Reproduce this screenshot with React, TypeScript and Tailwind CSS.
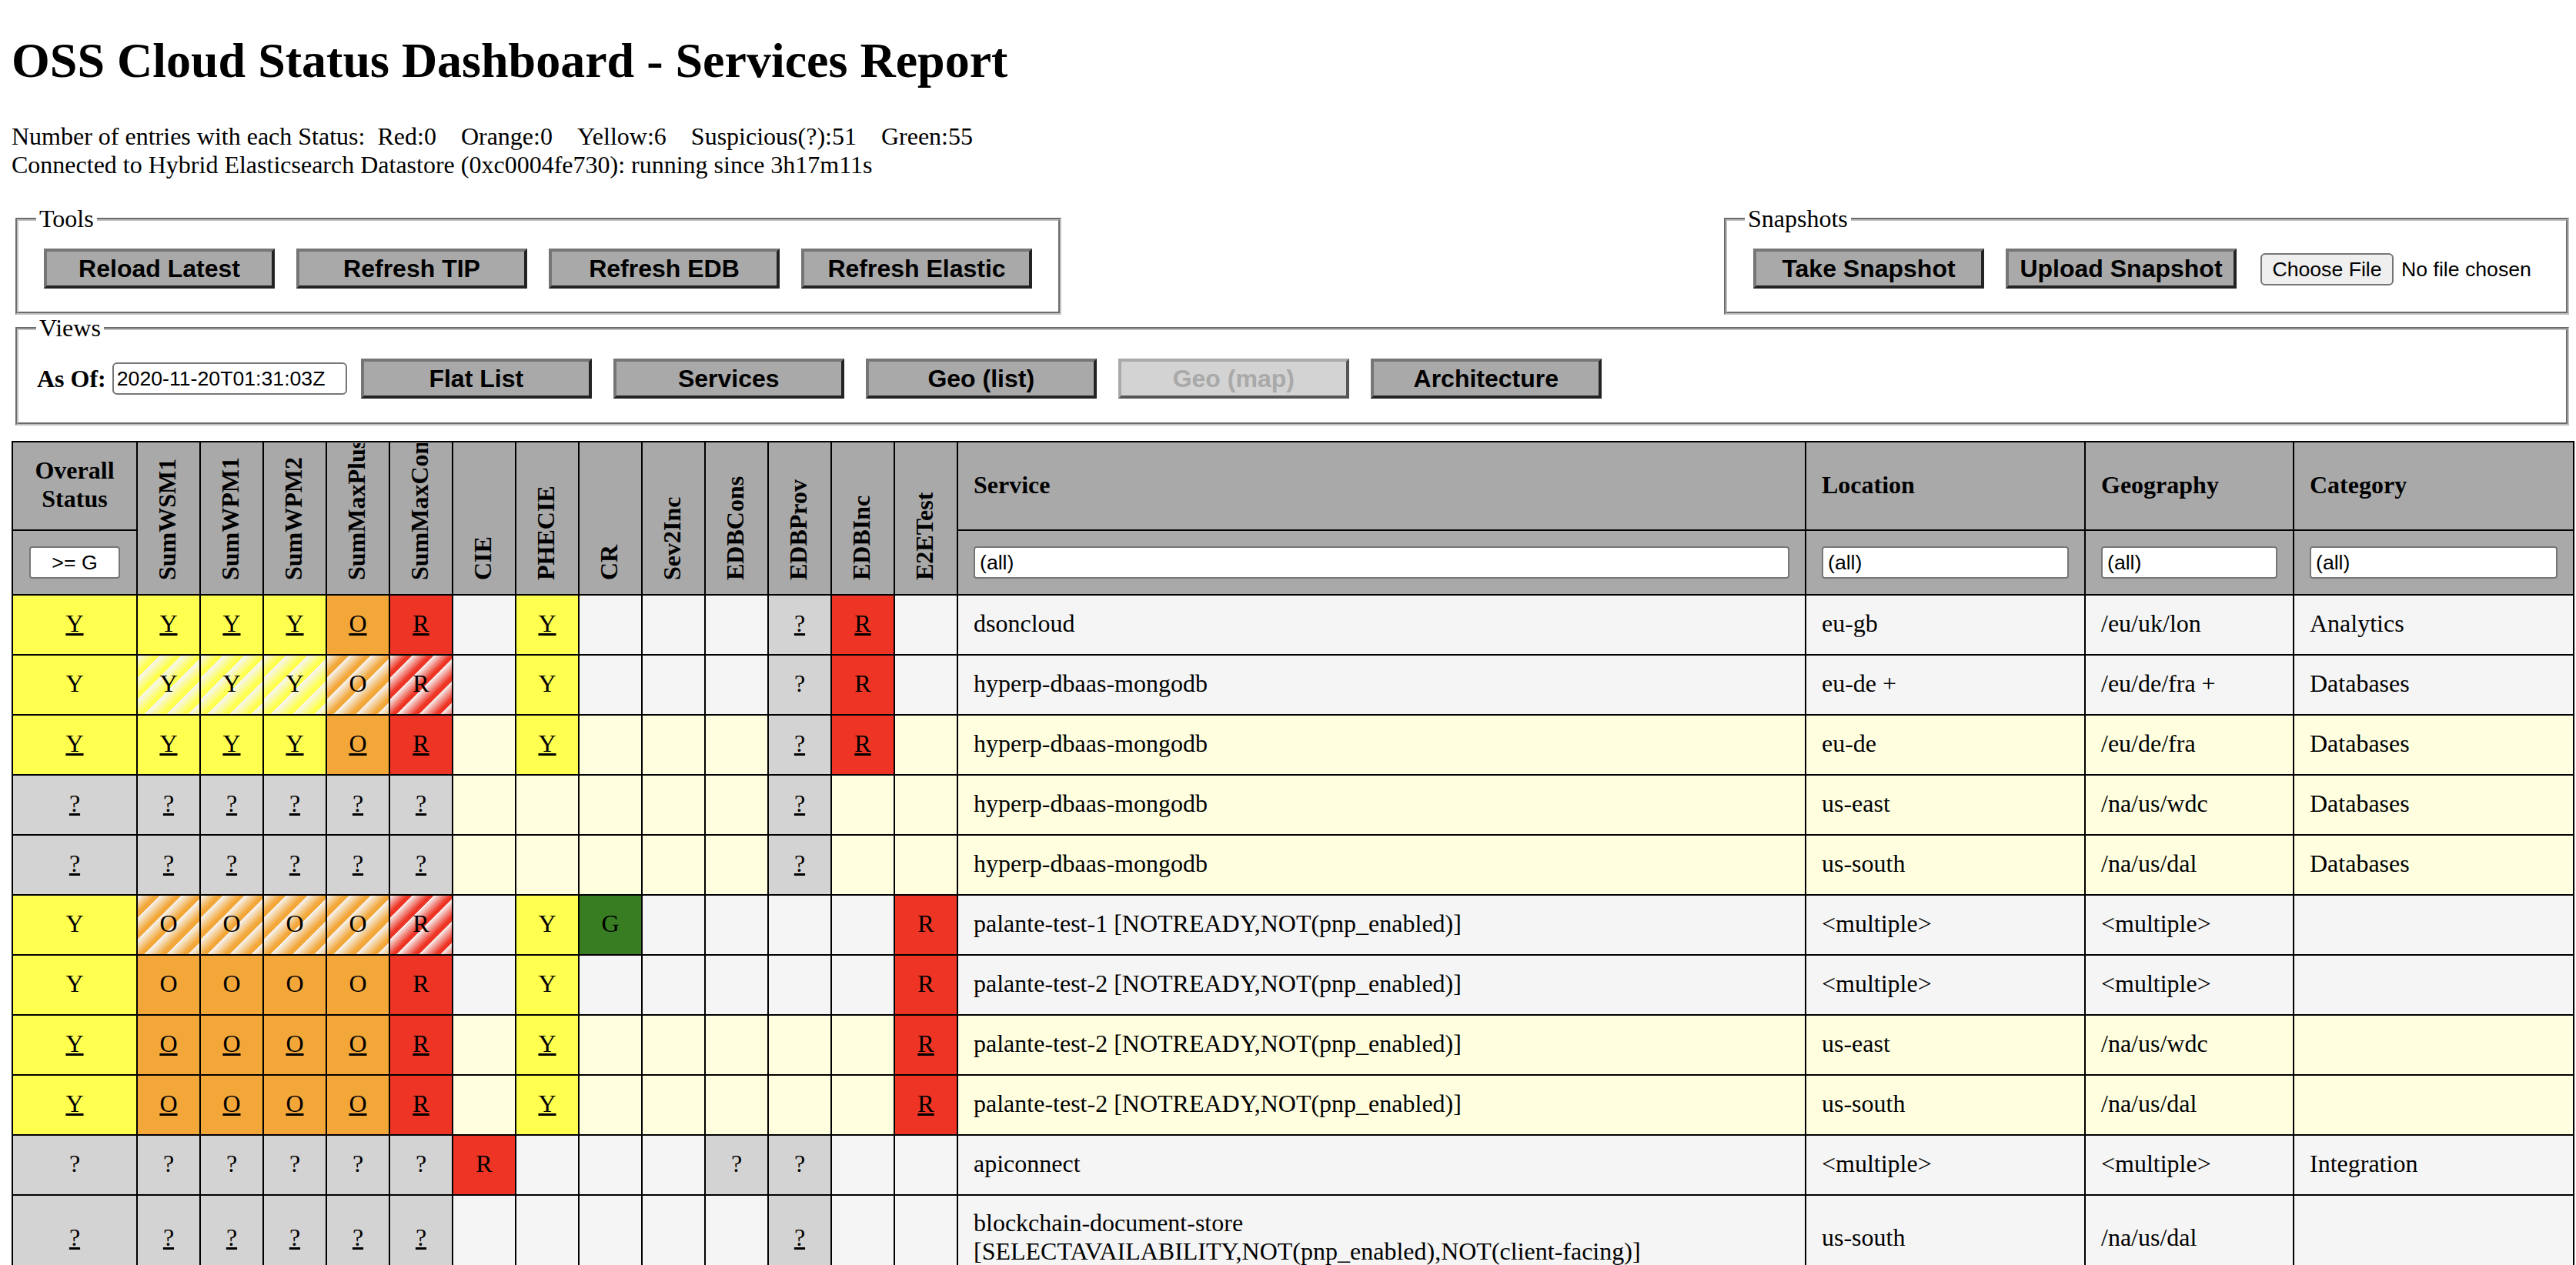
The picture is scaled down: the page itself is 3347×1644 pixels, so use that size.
import React from "react";

const bg: Record<string, string> = {
  Y: "bg-[#ffff50]",
  O: "bg-[#f3a738]",
  R: "bg-[#ee3424]",
  G: "bg-[#387d22]",
  "?": "bg-[#d3d3d3]",
  "Y*": "bg-[repeating-linear-gradient(135deg,#f5f5f5_0px,#ffff50_16px,#ffff50_20px)]",
  "O*": "bg-[repeating-linear-gradient(135deg,#f5f5f5_0px,#f3a738_16px,#f3a738_20px)]",
  "R*": "bg-[repeating-linear-gradient(135deg,#f5f5f5_0px,#ee3424_16px,#ee3424_20px)]",
};

type Row = {
  s: string[];
  u: boolean;
  z: "g" | "y";
  service: React.ReactNode;
  loc: string;
  geo: string;
  cat: string;
};

const rows: Row[] = [
  { s: ["Y", "Y", "Y", "Y", "O", "R", "", "Y", "", "", "", "?", "R", ""], u: true, z: "g", service: "dsoncloud", loc: "eu-gb", geo: "/eu/uk/lon", cat: "Analytics" },
  { s: ["Y", "Y*", "Y*", "Y*", "O*", "R*", "", "Y", "", "", "", "?", "R", ""], u: false, z: "g", service: "hyperp-dbaas-mongodb", loc: "eu-de +", geo: "/eu/de/fra +", cat: "Databases" },
  { s: ["Y", "Y", "Y", "Y", "O", "R", "", "Y", "", "", "", "?", "R", ""], u: true, z: "y", service: "hyperp-dbaas-mongodb", loc: "eu-de", geo: "/eu/de/fra", cat: "Databases" },
  { s: ["?", "?", "?", "?", "?", "?", "", "", "", "", "", "?", "", ""], u: true, z: "y", service: "hyperp-dbaas-mongodb", loc: "us-east", geo: "/na/us/wdc", cat: "Databases" },
  { s: ["?", "?", "?", "?", "?", "?", "", "", "", "", "", "?", "", ""], u: true, z: "y", service: "hyperp-dbaas-mongodb", loc: "us-south", geo: "/na/us/dal", cat: "Databases" },
  { s: ["Y", "O*", "O*", "O*", "O*", "R*", "", "Y", "G", "", "", "", "", "R"], u: false, z: "g", service: "palante-test-1 [NOTREADY,NOT(pnp_enabled)]", loc: "<multiple>", geo: "<multiple>", cat: "" },
  { s: ["Y", "O", "O", "O", "O", "R", "", "Y", "", "", "", "", "", "R"], u: false, z: "g", service: "palante-test-2 [NOTREADY,NOT(pnp_enabled)]", loc: "<multiple>", geo: "<multiple>", cat: "" },
  { s: ["Y", "O", "O", "O", "O", "R", "", "Y", "", "", "", "", "", "R"], u: true, z: "y", service: "palante-test-2 [NOTREADY,NOT(pnp_enabled)]", loc: "us-east", geo: "/na/us/wdc", cat: "" },
  { s: ["Y", "O", "O", "O", "O", "R", "", "Y", "", "", "", "", "", "R"], u: true, z: "y", service: "palante-test-2 [NOTREADY,NOT(pnp_enabled)]", loc: "us-south", geo: "/na/us/dal", cat: "" },
  { s: ["?", "?", "?", "?", "?", "?", "R", "", "", "", "?", "?", "", ""], u: false, z: "g", service: "apiconnect", loc: "<multiple>", geo: "<multiple>", cat: "Integration" },
  {
    s: ["?", "?", "?", "?", "?", "?", "", "", "", "", "", "?", "", ""],
    u: true,
    z: "g",
    service: (
      <>
        blockchain-document-store
        <br />
        [SELECTAVAILABILITY,NOT(pnp_enabled),NOT(client-facing)]
      </>
    ),
    loc: "us-south",
    geo: "/na/us/dal",
    cat: "",
  },
];

const vertical = ["SumWSM1", "SumWPM1", "SumWPM2", "SumMaxPlus", "SumMaxConc", "CIE", "PHECIE", "CR", "Sev2Inc", "EDBCons", "EDBProv", "EDBInc", "E2ETest"];
const textHeads = ["Service", "Location", "Geography", "Category"];

function Btn({ children, disabled }: { children: React.ReactNode; disabled?: boolean }) {
  return disabled ? (
    <button
      disabled
      className="w-[300px] h-[52px] shrink-0 border-4 border-t-[#a9a9a9] border-l-[#a9a9a9] border-r-[#555555] border-b-[#555555] bg-[#d3d3d3] text-[#a9a9a9] font-['Liberation_Sans',sans-serif] font-bold text-[32px] leading-[37px]"
    >
      {children}
    </button>
  ) : (
    <button className="w-[300px] h-[52px] shrink-0 border-4 border-t-[#767676] border-l-[#767676] border-r-[#232323] border-b-[#232323] bg-[#a9a9a9] text-black font-['Liberation_Sans',sans-serif] font-bold text-[32px] leading-[37px]">
      {children}
    </button>
  );
}

function Group({ title, className, children }: { title: string; className: string; children: React.ReactNode }) {
  return (
    <fieldset className={"border-4 [border-style:groove] border-[#c0c0c0] " + className}>
      <legend className="ml-[23px] px-1 text-[32px] leading-[37px]">{title}</legend>
      {children}
    </fieldset>
  );
}

function FilterInput({ value }: { value: string }) {
  return (
    <input
      readOnly
      value={value}
      className="block w-full h-[42px] bg-white border-2 border-[#767676] rounded-[4px] px-[6px] text-[26.67px] text-black font-['Liberation_Sans',sans-serif]"
    />
  );
}

export default function App() {
  return (
    <div className="w-[3347px] h-[1644px] overflow-hidden bg-white text-black pl-[15px] font-['Liberation_Serif',serif] text-[32px] leading-[37px]">
      <h1 className="pt-[42px] text-[64px] leading-[74px] font-bold">OSS Cloud Status Dashboard - Services Report</h1>
      <p className="mt-[43px]">
        Number of entries with each Status:{"\u00a0\u00a0"}Red:0{"\u00a0\u00a0\u00a0\u00a0"}Orange:0{"\u00a0\u00a0\u00a0\u00a0"}Yellow:6{"\u00a0\u00a0\u00a0\u00a0"}Suspicious(?):51{"\u00a0\u00a0\u00a0\u00a0"}Green:55
        <br />
        Connected to Hybrid Elasticsearch Datastore (0xc0004fe730): running since 3h17m11s
      </p>

      <div className="mt-[33px] ml-[5px] w-[3318px] flex justify-between items-start">
        <Group title="Tools" className="w-[1359px] h-[143px]">
          <div className="flex gap-7 pl-[33px] pt-5">
            <Btn>Reload Latest</Btn>
            <Btn>Refresh TIP</Btn>
            <Btn>Refresh EDB</Btn>
            <Btn>Refresh Elastic</Btn>
          </div>
        </Group>
        <Group title="Snapshots" className="w-[1098px] h-[143px]">
          <div className="flex gap-7 pl-[34px] pt-5 items-start">
            <Btn>Take Snapshot</Btn>
            <Btn>Upload Snapshot</Btn>
            <div className="ml-[3px] mt-[6px] flex items-center font-['Liberation_Sans',sans-serif] text-[26.67px]">
              <button className="w-[173px] h-[42px] bg-[#efefef] border-2 border-[#767676] rounded-[6px]">Choose File</button>
              <span className="ml-[10px] whitespace-nowrap">No file chosen</span>
            </div>
          </div>
        </Group>
      </div>

      <Group title="Views" className="mt-[-1px] ml-[5px] w-[3318px] h-[145px]">
        <div className="flex items-center pl-6 pt-[21px]">
          <b>As Of:</b>
          <input
            readOnly
            value="2020-11-20T01:31:03Z"
            className="ml-[8px] w-[305px] h-[42px] bg-white border-2 border-[#767676] rounded-[6px] px-[4px] text-[26.67px] font-['Liberation_Sans',sans-serif]"
          />
          <div className="ml-[18px] flex gap-7">
            <Btn>Flat List</Btn>
            <Btn>Services</Btn>
            <Btn>Geo (list)</Btn>
            <Btn disabled>Geo (map)</Btn>
            <Btn>Architecture</Btn>
          </div>
        </div>
      </Group>

      <table className="mt-5 table-fixed w-[3328px]">
        <colgroup>
          <col className="w-[162px]" />
          {vertical.map((v) => (
            <col key={v} className="w-[82px]" />
          ))}
          <col className="w-[1102px]" />
          <col className="w-[363px]" />
          <col className="w-[271px]" />
          <col className="w-[364px]" />
        </colgroup>
        <thead>
          <tr className="h-[115px]">
            <th className="border-2 border-black bg-[#a9a9a9] pb-[3px] font-bold text-center">
              Overall
              <br />
              Status
            </th>
            {vertical.map((v) => (
              <th key={v} rowSpan={2} className="border-2 border-black bg-[#a9a9a9] p-0 align-bottom">
                <div className="h-[196px] w-full overflow-hidden flex justify-center pr-[3px]">
                  <span className="[writing-mode:vertical-rl] rotate-180 h-[196px] pt-[18px] whitespace-nowrap text-left font-bold">{v}</span>
                </div>
              </th>
            ))}
            {textHeads.map((h) => (
              <th key={h} className="border-2 border-black bg-[#a9a9a9] px-5 pb-[3px] text-left font-bold">
                {h}
              </th>
            ))}
          </tr>
          <tr className="h-[84px]">
            <th className="border-2 border-black bg-[#a9a9a9]">
              <input
                readOnly
                value=">= G"
                className="block mx-auto w-[118px] h-[42px] bg-white border-2 border-[#767676] rounded-[4px] text-center text-[26.67px] font-['Liberation_Sans',sans-serif] font-normal"
              />
            </th>
            {textHeads.map((h) => (
              <th key={h} className="border-2 border-black bg-[#a9a9a9] px-5 font-normal">
                <FilterInput value="(all)" />
              </th>
            ))}
          </tr>
        </thead>
        <tbody>
          {rows.map((r, i) => {
            const zebra = r.z === "g" ? "bg-[#f5f5f5]" : "bg-[#ffffe0]";
            return (
              <tr key={i} className="h-[78px]">
                {r.s.map((c, j) => (
                  <td key={j} className={"border-2 border-black px-0 pt-0 pb-[3px] text-center " + (c ? bg[c] : zebra)}>
                    {c ? r.u ? <a className="underline">{c[0]}</a> : c[0] : null}
                  </td>
                ))}
                <td className={"border-2 border-black px-5 pt-[17px] pb-[21px] " + zebra}>{r.service}</td>
                <td className={"border-2 border-black px-5 pb-[3px] " + zebra}>{r.loc}</td>
                <td className={"border-2 border-black px-5 pb-[3px] " + zebra}>{r.geo}</td>
                <td className={"border-2 border-black px-5 pb-[3px] " + zebra}>{r.cat}</td>
              </tr>
            );
          })}
        </tbody>
      </table>
    </div>
  );
}
